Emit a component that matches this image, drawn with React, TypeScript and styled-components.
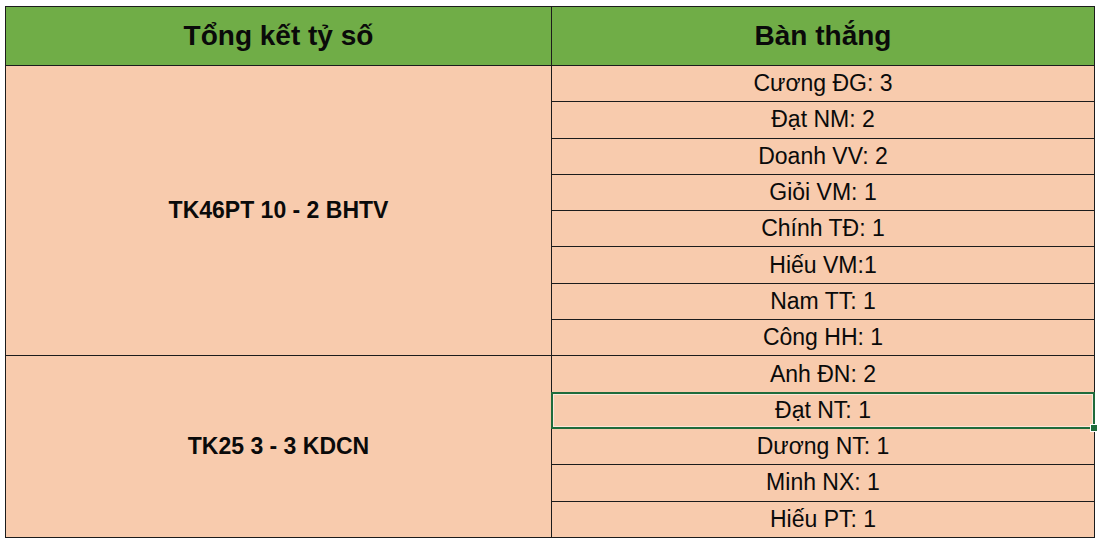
import React from 'react'
import styled, { createGlobalStyle } from 'styled-components'

const GlobalStyle = createGlobalStyle`
  html, body {
    margin: 0;
    padding: 0;
    background: #ffffff;
  }
  body {
    font-family: 'Liberation Sans', Arial, sans-serif;
    color: #0a0a0a;
  }
`

const Sheet = styled.div`
  padding: 6px 0 0 5px;
`

const Table = styled.table`
  border-collapse: collapse;
  table-layout: fixed;
  width: 1089px;
`

const HeadCell = styled.th`
  height: 58px;
  padding: 0;
  background: #70ad47;
  border: 1px solid #1c1c1c;
  font-size: 28px;
  font-weight: 700;
  text-align: center;
`

const MatchCell = styled.td`
  padding: 0;
  background: #f8cbad;
  border: 1px solid #1c1c1c;
  font-size: 23px;
  font-weight: 700;
  text-align: center;
  vertical-align: middle;
`

const ScorerCell = styled.td<{ $selected?: boolean }>`
  position: relative;
  height: 35.3px;
  padding: 0;
  background: #f8cbad;
  border: 1px solid #1c1c1c;
  font-size: 23px;
  text-align: center;
  vertical-align: middle;

  ${({ $selected }) => $selected && `
    &::after {
      content: '';
      position: absolute;
      inset: -1px;
      border: 2px solid #1f6b3b;
      box-shadow: inset 0 0 0 1px #fbe7da;
      pointer-events: none;
    }
    &::before {
      content: '';
      position: absolute;
      right: -4px;
      bottom: -4px;
      width: 6px;
      height: 6px;
      background: #1f6b3b;
      border: 1px solid #ffffff;
      z-index: 2;
    }
  `}
`

const matches = [
  {
    title: 'TK46PT 10 - 2 BHTV',
    scorers: ['Cương ĐG: 3', 'Đạt NM: 2', 'Doanh VV: 2', 'Giỏi VM: 1', 'Chính TĐ: 1', 'Hiếu VM:1', 'Nam TT: 1', 'Công HH: 1'],
  },
  {
    title: 'TK25 3 - 3 KDCN',
    scorers: ['Anh ĐN: 2', 'Đạt NT: 1', 'Dương NT: 1', 'Minh NX: 1', 'Hiếu PT: 1'],
  },
]

const selected = 'Đạt NT: 1'

export default function App() {
  return (
    <Sheet>
      <GlobalStyle />
      <Table>
        <colgroup>
          <col style={{ width: 546 }} />
          <col style={{ width: 543 }} />
        </colgroup>
        <thead>
          <tr>
            <HeadCell>Tổng kết tỷ số</HeadCell>
            <HeadCell>Bàn thắng</HeadCell>
          </tr>
        </thead>
        <tbody>
          {matches.map(m =>
            m.scorers.map((s, i) => (
              <tr key={m.title + s}>
                {i === 0 && <MatchCell rowSpan={m.scorers.length}>{m.title}</MatchCell>}
                <ScorerCell $selected={s === selected}>{s}</ScorerCell>
              </tr>
            ))
          )}
        </tbody>
      </Table>
    </Sheet>
  )
}
